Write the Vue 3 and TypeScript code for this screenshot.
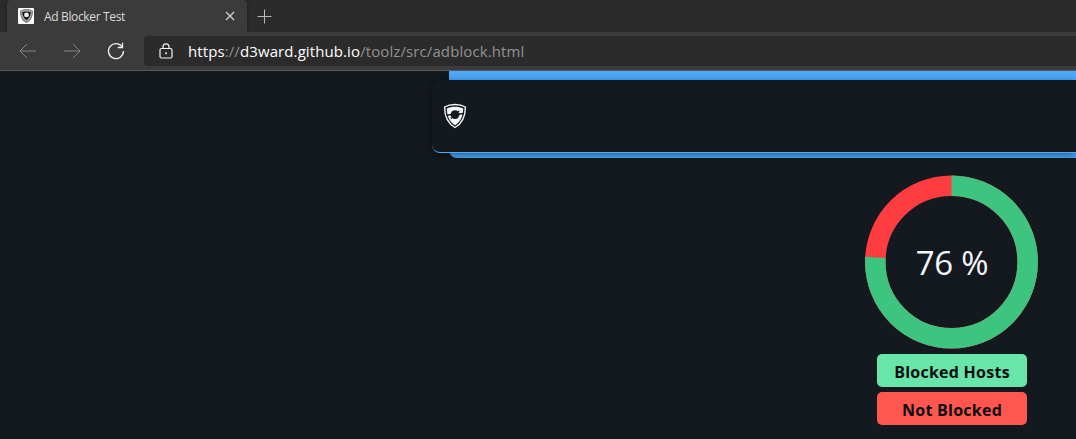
<template>
  <div class="browser">
    <div class="tab-strip">
      <div class="tab">
        <span class="favicon">
          <svg viewBox="0 0 24 26" width="13" height="14">
            <path d="M12 1C8.500 1 4 2 1 4C1 13 4 21 12 25C20 21 23 13 23 4C20 2 15.500 1 12 1Z" fill="#aaa" stroke="#777" stroke-width="2" />
            <path d="M4 6Q12 3 20 6Q19 16 12 21Q5 16 4 6Z" fill="#111" />
            <circle cx="12" cy="11" r="4.500" fill="#eee" />
          </svg>
        </span>
        <span class="tab-title">{{ title }}</span>
        <svg class="tab-close" viewBox="0 0 10 10" width="10" height="10">
          <path d="M1 1L9 9M9 1L1 9" stroke="#d5d5d5" stroke-width="1.2" />
        </svg>
      </div>
      <svg class="new-tab" viewBox="0 0 15 15" width="15" height="15">
        <path d="M7.500 0.500V14.500M0.500 7.500H14.500" stroke="#b8b8b8" />
      </svg>
    </div>

    <div class="toolbar">
      <svg class="nav-icon" viewBox="0 0 18 16" width="18" height="16">
        <path d="M17 8H1M8 1L1 8L8 15" fill="none" stroke="#858585" />
      </svg>
      <svg class="nav-icon" viewBox="0 0 18 16" width="18" height="16">
        <path d="M1 8H17M10 1L17 8L10 15" fill="none" stroke="#858585" />
      </svg>
      <svg class="nav-icon reload" viewBox="0 0 18 18" width="18" height="18">
        <path d="M15.500 5.300A7.500 7.500 0 1 0 16.500 9M15.500 0.800V5.500H10.800" fill="none" stroke="#f3f3f3" stroke-width="1.3" />
      </svg>
      <div class="address">
        <svg class="lock" viewBox="0 0 14 16" width="14" height="16">
          <rect x="1" y="5.500" width="12" height="9.500" rx="1.500" fill="none" stroke="#f3f3f3" stroke-width="1.200" />
          <path d="M4 5.500V3.800A3 3 0 0 1 10 3.800V5.500" fill="none" stroke="#f3f3f3" stroke-width="1.200" />
          <circle cx="7" cy="10.300" r="1" fill="#f3f3f3" />
        </svg>
        <span class="url"><b>https</b>://<b>d3ward.github.io</b>/toolz/src/adblock.html</span>
      </div>
    </div>

    <main class="page">
      <div class="banner">
        <header class="header">
          <svg viewBox="0 0 24 26" width="24" height="26">
            <path d="M12 1.500C8.500 1.500 4.500 2.300 1.600 4C1.600 13 4 20 12 24.500C20 20 22.400 13 22.400 4C19.500 2.300 15.500 1.500 12 1.500Z" fill="none" stroke="#f4f6f8" stroke-width="1.400" />
            <path d="M12 3.800C9 3.800 6 4.400 3.800 5.500C4 13 6 18.500 12 22.200C18 18.500 20 13 20.200 5.500C18 4.400 15 3.800 12 3.800Z" fill="#f4f6f8" />
            <circle cx="12" cy="11.600" r="4.400" fill="#14191f" />
            <path d="M3.500 12.200L9 11.600M15 11.300L20.500 10.600" stroke="#14191f" stroke-width="1.500" />
            <path d="M7.200 14.200L8.200 16.200L9.800 14.800M14.500 8.500L16 7.200L16.600 9.300" fill="#14191f" />
          </svg>
        </header>
      </div>

      <section class="result">
        <div class="chart">
          <svg viewBox="0 0 174 174" width="174" height="174">
            <circle class="ring ring-open" cx="86.500" cy="87" r="76.200" />
            <circle
              class="ring ring-blocked"
              cx="86.500"
              cy="87"
              r="76.200"
              pathLength="100"
              :stroke-dasharray="`${score} 100`"
              transform="rotate(-90 86.500 87)"
            />
          </svg>
          <span class="score">{{ score }} %</span>
        </div>
        <div v-for="item in legend" :key="item.label" class="legend" :class="item.kind">
          {{ item.label }}
        </div>
      </section>
    </main>
  </div>
</template>

<script setup lang="ts">
import { ref } from "vue";

interface LegendItem {
  label: string;
  kind: string;
}

const title = "Ad Blocker Test";
const score = ref(76);
const legend: LegendItem[] = [
  { label: "Blocked Hosts", kind: "blocked" },
  { label: "Not Blocked", kind: "open" },
];
</script>

<style>
body {
  margin: 0;
  background-color: #14191f;
}
</style>

<style scoped>
.browser {
  display: flex;
  flex-direction: column;
  height: 439px;
  overflow: hidden;
  font-family: "Segoe UI", "Open Sans", "Noto Sans", sans-serif;
}

svg {
  display: block;
  flex: none;
}

.tab-strip {
  display: flex;
  align-items: center;
  box-sizing: border-box;
  height: 32px;
  padding-left: 7px;
  background-color: #2b2b2b;
}

.tab {
  display: flex;
  align-items: center;
  box-sizing: border-box;
  width: 240px;
  height: 32px;
  padding: 0 12px 0 11px;
  border-radius: 4px 4px 0 0;
  background-color: #3b3b3b;
  box-shadow: 0 0 3px #1c1c1c;
}

.favicon {
  display: flex;
  align-items: center;
  justify-content: center;
  width: 16px;
  height: 16px;
  border-radius: 1px;
  background-color: #fff;
}

.tab-title {
  margin-left: 10px;
  font-size: 12px;
  letter-spacing: -0.35px;
  color: #dadada;
}

.tab-close {
  margin-left: auto;
}

.new-tab {
  margin-left: 10px;
}

.toolbar {
  display: flex;
  align-items: center;
  box-sizing: border-box;
  height: 39px;
  padding-left: 19px;
  border-bottom: 1px solid #5a5a58;
  background-color: #3b3b3b;
  position: relative;
}

.nav-icon {
  margin-right: 26px;
}

.reload {
  margin-right: 19px;
}

.address {
  display: flex;
  flex: 1;
  align-items: center;
  height: 30px;
  padding-left: 15px;
  border-radius: 4px 0 0 4px;
  background-color: #2b2b2b;
}

.url {
  margin-left: 15px;
  font-size: 15px;
  letter-spacing: 0.1px;
  color: #919191;
  white-space: nowrap;
}

.url b {
  font-weight: 400;
  color: #fff;
}

.page {
  flex: 1;
  background-color: #14191f;
}

.banner {
  box-sizing: border-box;
  height: 87px;
  margin-left: 449px;
  padding-top: 9px;
  border-bottom-left-radius: 8px;
  background-color: #4dabff;
}

.header {
  display: flex;
  align-items: center;
  box-sizing: border-box;
  height: 73px;
  margin-left: -17px;
  padding-left: 11px;
  border-bottom: 1px solid #4dabff;
  border-radius: 8px 0 0 8px;
  background-color: #14191f;
  box-shadow: 0 2px 8px rgba(0, 0, 0, 0.5);
}

.result {
  display: flex;
  flex-direction: column;
  align-items: center;
  width: 174px;
  margin: 17px 0 0 865px;
}

.chart {
  display: grid;
  place-items: center;
  margin-bottom: 5px;
}

.chart > * {
  grid-area: 1 / 1;
}

.ring {
  fill: none;
  stroke-width: 20.5px;
}

.ring-open {
  stroke: #ff3c40;
}

.ring-blocked {
  stroke: #3dc47e;
}

.score {
  font-size: 33px;
  letter-spacing: -0.3px;
  color: #f5f7fa;
}

.legend {
  width: 150px;
  height: 33px;
  margin-bottom: 5px;
  border-radius: 5px;
  font-size: 16px;
  font-weight: 700;
  letter-spacing: 0.25px;
  line-height: 36px;
  text-align: center;
  color: #0b0d10;
}

.legend.blocked {
  background-color: #68e5a9;
}

.legend.open {
  background-color: #ff574f;
}
</style>
